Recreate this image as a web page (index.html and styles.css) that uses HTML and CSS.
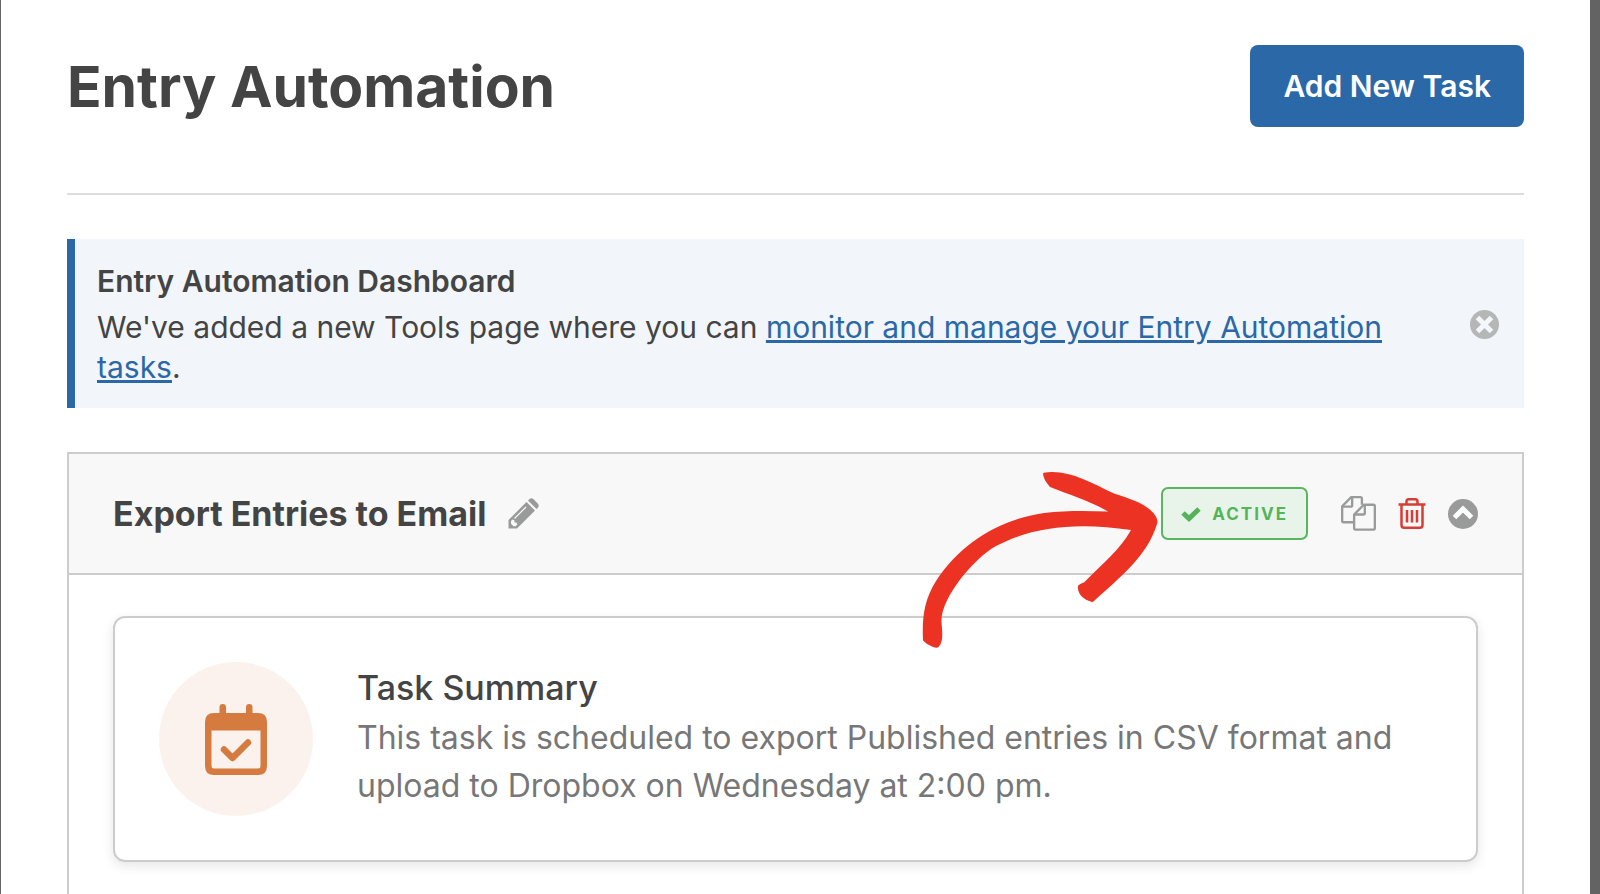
FILE: index.html
```html
<!DOCTYPE html>
<html lang="en">
<head>
    <meta charset="UTF-8">
    <meta name="viewport" content="width=device-width, initial-scale=1.0">
    <title>Entry Automation</title>
    <link rel="stylesheet" href="styles.css">
</head>
<body>
    <main class="page">
        <header class="page-header">
            <h1>Entry Automation</h1>
            <button type="button" class="add-button">Add New Task</button>
        </header>

        <section class="notice">
            <div class="notice-text">
                <h2>Entry Automation Dashboard</h2>
                <p>We've added a new Tools page where you can <a href="#">monitor and manage your Entry Automation tasks</a>.</p>
            </div>
            <button type="button" class="icon-button" aria-label="Dismiss">
                <svg width="29" height="29" viewBox="0 0 29 29">
                    <circle cx="14.5" cy="14.5" r="14.5" fill="#b5b7b7"/>
                    <path d="M7.500 7.500L21.500 21.500M21.500 7.500L7.500 21.500" stroke="#f3f7fb" stroke-width="5"/>
                </svg>
            </button>
        </section>

        <section class="task">
            <div class="task-header">
                <h2>Export Entries to Email</h2>
                <button type="button" class="icon-button" aria-label="Rename">
                    <svg width="31" height="31" viewBox="0 0 31 31">
                        <path d="M0.500 22L18.500 4L27 12.500L9 30.500H0.500Z" fill="#999b9a"/>
                        <path d="M20 2.500L21.500 1Q23.500 -0.500 25.500 1.200L30 5.700Q31.400 7.500 30 9.500L28.500 11Z" fill="#999b9a"/>
                        <path d="M6.500 20.500L18 9" stroke="#f8f8f8" stroke-width="1.200"/>
                        <path d="M3 23L4.500 21.500L6.500 22.500V24.500H8.500L9.300 26.500L7.600 28.200H5.500L3 25.800Z" fill="#f8f8f8"/>
                    </svg>
                </button>
                <div class="task-actions">
                    <button type="button" class="status">
                        <svg width="20" height="16" viewBox="0 0 20 16">
                            <path d="M2 7L8 12.500L18 3" fill="none" stroke="#55b45a" stroke-width="5"/>
                        </svg>
                        Active
                    </button>
                    <div class="task-icons">
                        <button type="button" class="icon-button" aria-label="Duplicate">
                            <svg width="35" height="35" viewBox="0 0 36 36" fill="none" stroke="#999b9a" stroke-width="2.400" stroke-linejoin="round">
                                <path d="M21.500 9V3Q21.500 1.200 20 1.200H10.500L1.200 10.500V25.500Q1.200 27 2.500 27H13"/>
                                <path d="M11.500 1.500V9.500Q11.500 11 10 11H1.500"/>
                                <path d="M23.500 9H33.500Q34.800 9 34.800 10.500V33Q34.800 34.600 33.500 34.600H15Q13.500 34.600 13.500 33V19Z" fill="#f8f8f8"/>
                                <path d="M24.500 9.500V17.500Q24.500 19 23 19H14"/>
                            </svg>
                        </button>
                        <button type="button" class="icon-button" aria-label="Delete">
                            <svg width="28" height="31" viewBox="0 0 28 31" fill="none" stroke="#d63d34" stroke-width="2.500">
                                <path d="M0.500 6.500H27.500"/>
                                <path d="M8.500 6V3.500Q8.500 1.300 11 1.300H17Q19.500 1.300 19.500 3.500V6"/>
                                <path d="M3.500 6.500V27Q3.500 29.700 6 29.700H22Q24.500 29.700 24.500 27V6.500"/>
                                <path d="M9 12V24.500M14 12V24.500M19 12V24.500"/>
                            </svg>
                        </button>
                        <button type="button" class="icon-button" aria-label="Collapse">
                            <svg width="30" height="30" viewBox="0 0 30 30">
                                <circle cx="15" cy="15" r="15" fill="#999b9a"/>
                                <path d="M6.500 18.500L15 10L23.500 18.500" fill="none" stroke="#fff" stroke-width="5"/>
                            </svg>
                        </button>
                    </div>
                </div>
            </div>

            <div class="task-body">
                <div class="summary">
                    <div class="summary-icon">
                        <svg width="62" height="71" viewBox="0 0 62 71">
                            <rect x="14.500" y="0" width="6.500" height="16" rx="3.200" fill="#d57b3f"/>
                            <rect x="41" y="0" width="6.500" height="16" rx="3.200" fill="#d57b3f"/>
                            <path fill-rule="evenodd" d="M9 9H53Q62 9 62 18V62Q62 71 53 71H9Q0 71 0 62V18Q0 9 9 9ZM6.500 26.500V62Q6.500 64.500 9 64.500H53Q55.500 64.500 55.500 62V26.500Z" fill="#d57b3f"/>
                            <path d="M19 45.500L27.500 54L43 38.500" fill="none" stroke="#d57b3f" stroke-width="6.500" stroke-linecap="round" stroke-linejoin="round"/>
                        </svg>
                    </div>
                    <div class="summary-text">
                        <h3>Task Summary</h3>
                        <p>This task is scheduled to export Published entries in CSV format and upload to Dropbox on Wednesday at 2:00 pm.</p>
                    </div>
                </div>
            </div>

            <!-- pointer to the status button -->
            <svg class="arrow" width="240" height="180" viewBox="20 20 240 180" aria-hidden="true">
                <path fill="#ec3323" d="M143 23.500Q144 22 151 22C172 21.500 192 33 214 43.500C234 50 252 56 257 69Q258 72 257 74C247 107 219 128 194 151Q192 153 191 151.500C184 150 177 144 178 136Q179 134 184 132.500C202 114 220 100 231 80C178 72 134 76 96 96C74 108 41 148 41.500 171C42 182 44 191 38.500 197Q37 198.500 33 197Q27 195 23 190.500C22 168 24 150 36 131C62 91 102 69 144 63C166 60.500 187 61 208 61.500C190 51 170 45 150 37Q143 29 143 23.500Z"/>
            </svg>
        </section>
    </main>
</body>
</html>
```

FILE: styles.css
```css
* {
    box-sizing: border-box;
}
body {
    height: 100vh;
    margin: 0;
    overflow: hidden;
    font-family: Inter, "Liberation Sans", sans-serif;
    color: #444;
    background-color: #fff;
}
h1, h2, h3, p {
    margin: 0;
}
button {
    font-family: inherit;
    cursor: pointer;
}
svg {
    display: block;
}
.page {
    display: flex;
    flex-direction: column;
    min-height: 100vh;
    padding: 45px 66px 0;
    border-left: 1px solid #666;
    border-right: 10px solid #636363;
}
.page-header {
    display: flex;
    justify-content: space-between;
    align-items: center;
    padding-bottom: 66px;
    border-bottom: 2px solid #ddd;
}
.page-header h1 {
    padding-top: 2px;
    font-size: 57px;
    font-weight: 700;
    line-height: 80px;
}
.add-button {
    height: 82px;
    padding: 0 33px;
    border: none;
    border-radius: 8px;
    background-color: #2b68a8;
    color: #fff;
    font-size: 30px;
    font-weight: 600;
}
.icon-button {
    padding: 0;
    border: none;
    background: none;
}
.notice {
    display: flex;
    justify-content: space-between;
    align-items: center;
    margin-top: 44px;
    padding: 22px 25px 21px 22px;
    border-left: 8px solid #2b68a8;
    background-color: #f2f6fa;
    font-size: 30px;
    line-height: 40px;
}
.notice-text {
    padding-right: 60px;
}
.notice h2 {
    margin-bottom: 6px;
    font-size: 30px;
    font-weight: 600;
}
.notice a {
    color: #2b68a8;
}
.task {
    position: relative;
    flex: 1;
    margin-top: 44px;
    border: 2px solid #ccc;
    border-bottom: none;
}
.task-header {
    display: flex;
    align-items: center;
    gap: 22px;
    height: 121px;
    padding: 0 44px;
    border-bottom: 2px solid #ccc;
    background-color: #f8f8f8;
}
.task-header h2 {
    font-size: 34px;
    font-weight: 700;
}
.task-actions {
    display: flex;
    align-items: center;
    gap: 33px;
    margin-left: auto;
}
.task-icons {
    display: flex;
    align-items: center;
    gap: 22px;
}
.status {
    display: flex;
    align-items: center;
    gap: 11px;
    height: 53px;
    padding: 0 18px;
    border: 2px solid #5ab55f;
    border-radius: 7px;
    background-color: #e8f4ea;
    color: #55b45a;
    font-size: 17px;
    font-weight: 700;
    letter-spacing: 2px;
    text-transform: uppercase;
}
.task-body {
    padding: 41px 44px;
}
.summary {
    display: flex;
    align-items: center;
    gap: 44px;
    padding: 44px;
    border: 2px solid #ccc;
    border-radius: 12px;
    box-shadow: 0 4px 12px rgba(0, 0, 0, 0.1);
}
.summary-icon {
    display: flex;
    flex-shrink: 0;
    justify-content: center;
    align-items: center;
    width: 154px;
    height: 154px;
    border-radius: 50%;
    background-color: #fbf2ed;
}
.summary-text {
    padding-bottom: 4px;
    line-height: 48px;
}
.summary-text h3 {
    margin-bottom: 2px;
    font-size: 34px;
    font-weight: 500;
}
.summary-text p {
    color: #777;
    font-size: 32px;
}
.arrow {
    position: absolute;
    top: 16px;
    right: 362px;
}
```
